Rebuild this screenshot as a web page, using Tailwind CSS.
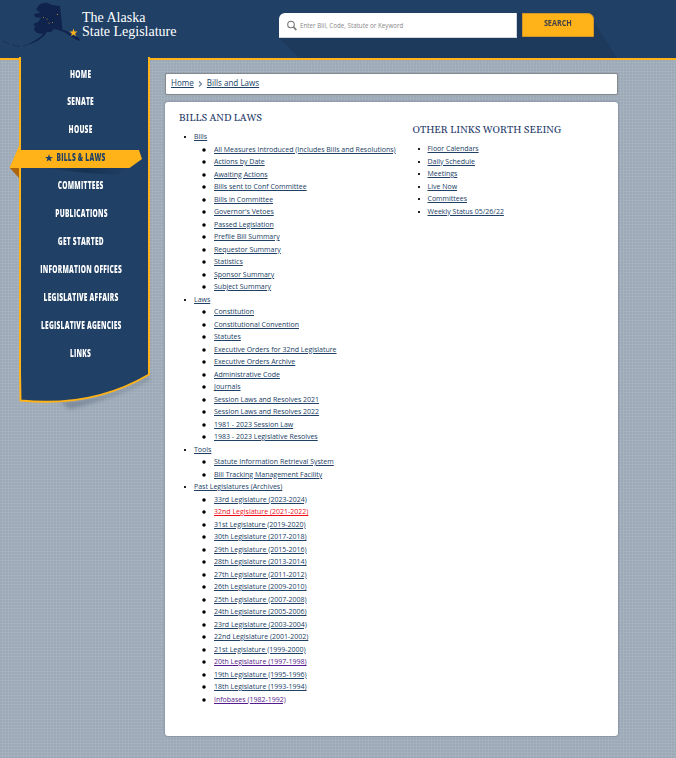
<!DOCTYPE html>
<html lang="en">
<head>
<meta charset="utf-8">
<title>The Alaska State Legislature</title>
<script src="https://cdn.jsdelivr.net/npm/@tailwindcss/browser@4"></script>
</head>
<body class="w-[676px] h-[758px] overflow-hidden relative bg-[#a5b1bd] bg-[radial-gradient(circle_at_1px_1px,#9ba8b6_0.7px,transparent_0.9px)] bg-[size:3px_3px] font-['Open_Sans',sans-serif] text-[#204065]">
<header class="h-[60px] bg-[#204065] border-b-2 border-[#ffb319] flex relative">
  <svg class="absolute left-0 top-0" width="676" height="58" viewBox="0 0 676 58">
    <path d="M279 37L299 58H617L593 20L517 13V38Z" fill="#1d395c"/>
    <path d="M40 4L46 2.500L52 5L60 6L62.500 30L67 31L72 35L79 38L80 41L75 39L69 35L64 32L58 30L54 29L51 32L47 32L44 36L39 40L33 43L27 45L34 41L40 37L43 34L37 33L34 30L35 26L33 24L38 22L41 18L35 17L34 14L40 13L36 9Z" fill="#10234c"/>
    <path d="M3 41L9 44M12 45L20 46.500M23 46L30 44" stroke="#1a3259" stroke-width="1" fill="none"/>
    <g fill="#c99a35"><circle cx="57.500" cy="14.500" r=".6"/><circle cx="43.500" cy="17.500" r=".5"/><circle cx="47" cy="19" r=".5"/><circle cx="49" cy="23" r=".5"/><circle cx="52.500" cy="22.500" r=".5"/></g>
    <path d="M73.500 28.500L74.500 31.600H77.500L75.100 33.400L76 36.300L73.500 34.600L71 36.300L71.900 33.400L69.500 31.600H72.500Z" fill="#ffb319"/>
  </svg>
  <div class="relative w-[279px] pl-[82px] pt-[11px] font-['Liberation_Serif',serif] text-white text-[14px] leading-[14px] whitespace-nowrap"><div>The Alaska</div><div>State Legislature</div></div>
  <form class="relative flex gap-[5px] pt-[13px]">
    <label class="w-[238px] h-[25px] bg-white rounded-tl-[6px] border-b border-r border-[#cfd6de] flex items-center pl-[8px] gap-[3px]">
      <svg width="10" height="11" viewBox="0 0 10 11" fill="none" stroke="#777"><circle cx="4" cy="4.500" r="3.300" stroke-width="1.100"/><path d="M6.500 7L9.300 10" stroke-width="1.800"/></svg>
      <span class="text-[6.250px] text-[#888] pt-px">Enter Bill, Code, Statute or Keyword</span>
    </label>
    <button type="button" class="w-[72px] h-[24px] bg-[#ffb319] border border-[#d0962a] rounded-tr-[6px] text-[7.700px] font-bold text-[#414246] flex items-center justify-center pb-[2px]"><span class="inline-block scale-x-[.94] scale-y-[1.08]">SEARCH</span></button>
  </form>
</header>

<nav class="absolute left-0 top-[57px] w-[160px] h-[360px] text-white">
  <svg class="absolute left-0 top-0" width="160" height="360" viewBox="0 57 160 360">
    <defs>
      <filter id="b"><feGaussianBlur stdDeviation="2"/></filter>
      <linearGradient id="s"><stop offset="0" stop-color="#142c49" stop-opacity="0"/><stop offset=".5" stop-color="#142c49" stop-opacity=".7"/><stop offset="1" stop-color="#142c49" stop-opacity="0"/></linearGradient>
    </defs>
    <path d="M60 402Q110 400 149 376L150 379Q120 396 70 409Z" fill="#5c6b7d" opacity=".55" filter="url(#b)"/>
    <path d="M20 57V400Q92 408 149 375V57Z" fill="#204065"/>
    <path d="M20 57V372L20.500 400.500Q92 408 149 374.500V57" fill="none" stroke="#ffb319" stroke-width="2"/>
    <path d="M9.500 167.500H19V178Z" fill="#ad650d"/>
    <path d="M40 168H130L118 175Q80 173 40 168Z" fill="url(#s)"/>
    <path d="M19 146L21 150H139L142 159L129.500 168H9.500Z" fill="#ffb319"/>
  </svg>
  <ul class="relative pt-[4px] ml-[19px] w-[124px] flex flex-col text-center font-extrabold text-[9.700px] tracking-[.35px] leading-[28px] whitespace-nowrap">
    <li class="h-[27px]"><span class="inline-block scale-x-[.68]">HOME</span></li>
    <li class="h-[28px]"><span class="inline-block scale-x-[.68]">SENATE</span></li>
    <li class="h-[28px]"><span class="inline-block scale-x-[.68]">HOUSE</span></li>
    <li class="h-[28px] text-[#204065] relative"><svg class="absolute left-[26px] top-[10px]" width="8" height="8" viewBox="0 0 8 8"><path d="M4 0L5 2.900H8L5.600 4.700L6.500 7.600L4 5.900L1.500 7.600L2.400 4.700L0 2.900H3Z" fill="#204065"/></svg><span class="inline-block scale-x-[.68]">BILLS &amp; LAWS</span></li>
    <li class="h-[28px]"><span class="inline-block scale-x-[.68]">COMMITTEES</span></li>
    <li class="h-[28px]"><span class="inline-block scale-x-[.68]">PUBLICATIONS</span></li>
    <li class="h-[28px]"><span class="inline-block scale-x-[.68]">GET STARTED</span></li>
    <li class="h-[28px]"><span class="inline-block scale-x-[.68]">INFORMATION OFFICES</span></li>
    <li class="h-[28px]"><span class="inline-block scale-x-[.68]">LEGISLATIVE AFFAIRS</span></li>
    <li class="h-[28px]"><span class="inline-block scale-x-[.68]">LEGISLATIVE AGENCIES</span></li>
    <li class="h-[28px]"><span class="inline-block scale-x-[.68]">LINKS</span></li>
  </ul>
</nav>

<main class="ml-[165px] w-[453px] pt-[13px]">
  <div class="h-[22px] bg-white border border-[#858a8c] rounded-[2px] shadow-[0_0_1px_#777] flex items-center pl-[5px] pb-[1px] text-[8.050px]">
    <a class="underline underline-offset-[1px]">Home</a>
    <svg class="mx-[4px] mt-px" width="5" height="6" viewBox="0 0 5 6"><path d="M1 .5L3.500 3L1 5.500" fill="none" stroke="#75879c" stroke-width="1.300"/></svg>
    <a class="underline underline-offset-[1px]">Bills and Laws</a>
  </div>
  <section class="mt-[7px] h-[634px] bg-white rounded-[3px] shadow-[0_0_2px_#59697a] flex text-[7px] leading-[12.500px] whitespace-nowrap [&_a]:underline [&_a]:underline-offset-[1px]">
    <div class="w-[234px] pl-[14px] pt-[8px]">
      <h2 class="font-[Georgia,Gelasio,'Liberation_Serif',serif] text-[10px] leading-[16px] text-[#1d3768] mb-[5px]">BILLS AND LAWS</h2>
      <ul id="bills"></ul>
    </div>
    <div class="pl-[13.500px] pt-[20px]">
      <h2 class="font-[Georgia,Gelasio,'Liberation_Serif',serif] text-[10px] leading-[16px] text-[#1d3768] mb-[5px]">OTHER LINKS WORTH SEEING</h2>
      <ul id="others"></ul>
    </div>
  </section>
</main>
<script>
const groups = [
 ["Bills", ["All Measures Introduced (Includes Bills and Resolutions)","Actions by Date","Awaiting Actions","Bills sent to Conf Committee","Bills in Committee","Governor's Vetoes","Passed Legislation","Prefile Bill Summary","Requestor Summary","Statistics","Sponsor Summary","Subject Summary"]],
 ["Laws", ["Constitution","Constitutional Convention","Statutes","Executive Orders for 32nd Legislature","Executive Orders Archive","Administrative Code","Journals","Session Laws and Resolves 2021","Session Laws and Resolves 2022","1981 - 2023 Session Law","1983 - 2023 Legislative Resolves"]],
 ["Tools", ["Statute Information Retrieval System","Bill Tracking Management Facility"]],
 ["Past Legislatures (Archives)", ["33rd Legislature (2023-2024)","32nd Legislature (2021-2022)","31st Legislature (2019-2020)","30th Legislature (2017-2018)","29th Legislature (2015-2016)","28th Legislature (2013-2014)","27th Legislature (2011-2012)","26th Legislature (2009-2010)","25th Legislature (2007-2008)","24th Legislature (2005-2006)","23rd Legislature (2003-2004)","22nd Legislature (2001-2002)","21st Legislature (1999-2000)","20th Legislature (1997-1998)","19th Legislature (1995-1996)","18th Legislature (1993-1994)","Infobases (1982-1992)"]]
];
const square = '<i class="w-[2px] h-[2px] bg-[#222] ml-[5px] mr-[8px]"></i>';
const disc = '<svg class="mr-[8px]" width="4" height="4" viewBox="0 0 4 4"><circle cx="2" cy="2" r="1.750"/></svg>';
const colour = t => t.startsWith("32nd") ? "text-[#f00c18]" : /^(20th|Infobases)/.test(t) ? "text-[#551a8b]" : "";
const row = (t, mark) => `<div class="flex items-center h-[12.500px]">${mark}<a class="${colour(t)}">${t}</a></div>`;
document.getElementById("bills").innerHTML = groups.map(([t, kids]) => `<li>${row(t, square)}<ul class="pl-[23px]">${kids.map(k => `<li>${row(k, disc)}</li>`).join("")}</ul></li>`).join("");
document.getElementById("others").innerHTML = ["Floor Calendars","Daily Schedule","Meetings","Live Now","Committees","Weekly Status 05/26/22"].map(t => `<li>${row(t, square)}</li>`).join("");
</script>
</body>
</html>
